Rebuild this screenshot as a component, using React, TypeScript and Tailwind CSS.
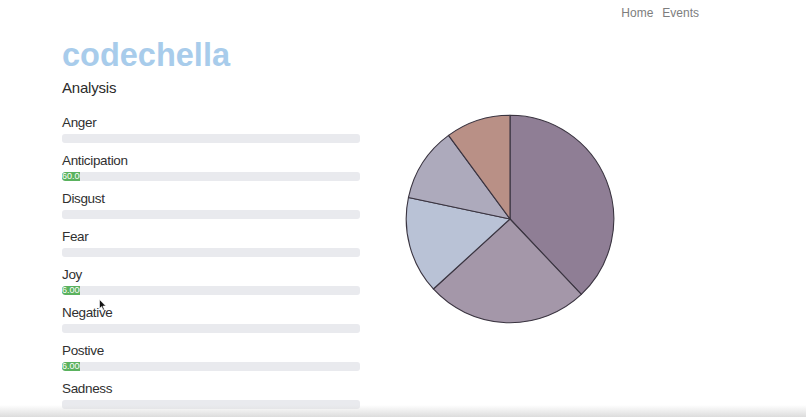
import React from "react";

const items: { label: string; value?: string }[] = [
  { label: "Anger" },
  { label: "Anticipation", value: "60.00" },
  { label: "Disgust" },
  { label: "Fear" },
  { label: "Joy", value: "6.000" },
  { label: "Negative" },
  { label: "Postive", value: "6.000" },
  { label: "Sadness" },
];

const slices = [
  { start: 0, end: 136.6, color: "#8f7e95" },
  { start: 136.6, end: 227.6, color: "#a497a9" },
  { start: 227.6, end: 282, color: "#b9c2d6" },
  { start: 282, end: 323.7, color: "#adaabc" },
  { start: 323.7, end: 360, color: "#b99086" },
];

function pt(cx: number, cy: number, r: number, deg: number) {
  const a = (deg * Math.PI) / 180;
  return [cx + r * Math.sin(a), cy - r * Math.cos(a)];
}

function Pie() {
  const cx = 105;
  const cy = 105;
  const r = 103.8;
  return (
    <svg width="210" height="210" viewBox="0 0 210 210">
      {slices.map((s, i) => {
        const [x1, y1] = pt(cx, cy, r, s.start);
        const [x2, y2] = pt(cx, cy, r, s.end);
        const large = s.end - s.start > 180 ? 1 : 0;
        return (
          <path
            key={i}
            d={`M${cx},${cy} L${x1},${y1} A${r},${r} 0 ${large} 1 ${x2},${y2} Z`}
            fill={s.color}
            stroke="#3a3440"
            strokeWidth="1.1"
            strokeLinejoin="round"
          />
        );
      })}
    </svg>
  );
}

export default function App() {
  return (
    <div
      className="relative w-[806px] h-[417px] overflow-hidden bg-white text-[#2b2b2b]"
      style={{ fontFamily: '"Liberation Sans", Arial, sans-serif' }}
    >
      <div className="h-[39px] flex justify-end items-start pt-[6px] pr-[107px] gap-[9px] text-[12px] leading-[14px] text-[#7d7d7d]">
        <span>Home</span>
        <span>Events</span>
      </div>
      <div className="flex">
        <div className="w-[360px] pl-[62px] flex flex-col">
          <div className="text-[32.5px] leading-[32px] font-bold text-[#a8cceb]">codechella</div>
          <div className="mt-[8px] text-[15px] leading-[18px] tracking-[-0.2px]">Analysis</div>
          <div className="mt-[18px] flex flex-col">
            {items.map((it) => (
              <div key={it.label} className="flex flex-col h-[38px]">
                <div className="text-[13.5px] leading-[15px] tracking-[-0.35px] text-[#303030]">{it.label}</div>
                <div className="mt-[4px] h-[9px] w-full rounded-[3px] bg-[#e9eaee] overflow-hidden flex">
                  {it.value && (
                    <div className="w-[18px] h-full bg-[#5ab25e] rounded-l-[3px] overflow-hidden whitespace-nowrap text-[9px] leading-[9px] text-white">
                      {it.value}
                    </div>
                  )}
                </div>
              </div>
            ))}
          </div>
        </div>
        <div className="ml-[45px] pt-[75px]">
          <Pie />
        </div>
      </div>
      <svg className="absolute left-[99px] top-[299px]" width="8" height="12" viewBox="0 0 8 12">
        <path d="M0.5,0.5 L0.5,9.5 L2.6,7.6 L4.1,11 L5.4,10.4 L3.9,7.1 L6.8,7.1 Z" fill="#111" stroke="#fff" strokeWidth="0.6" />
      </svg>
      <div className="absolute left-0 right-0 bottom-0 h-[12px] bg-gradient-to-b from-transparent to-[#dcdcdc]" />
    </div>
  );
}
